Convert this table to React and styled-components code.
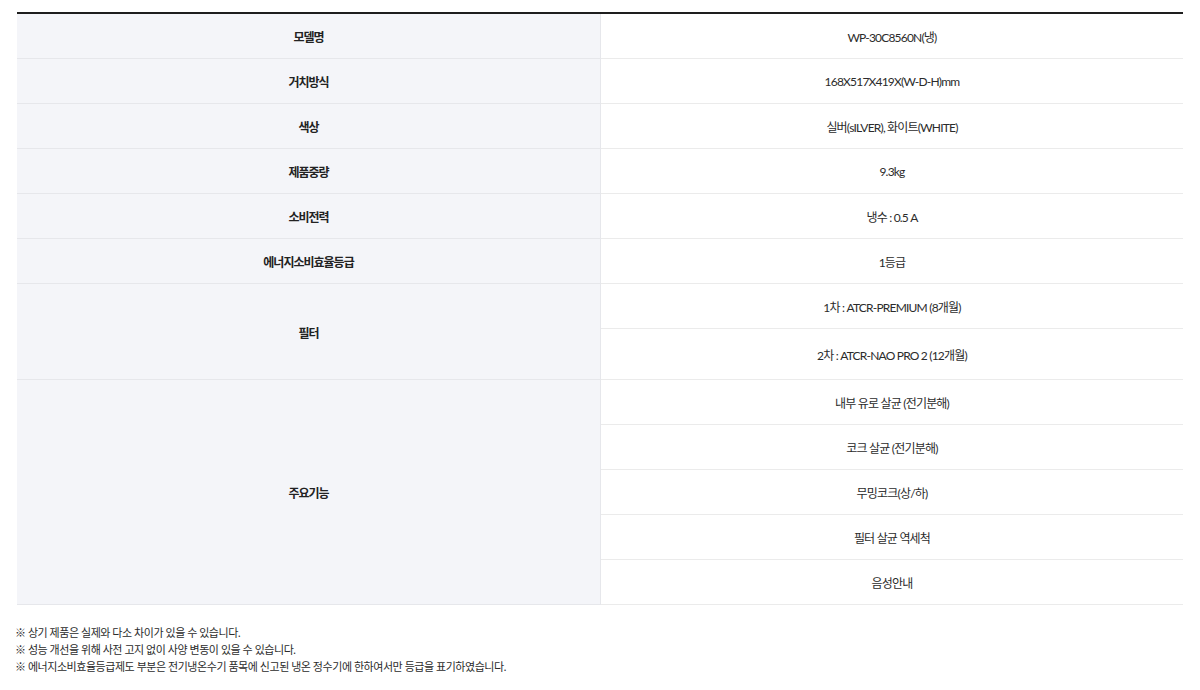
import React from 'react';
import styled, { createGlobalStyle } from 'styled-components';

const specs = [
  { label: '모델명', values: ['WP-30C8560N(냉)'] },
  { label: '거치방식', values: ['168X517X419X(W-D-H)mm'] },
  { label: '색상', values: ['실버(sILVER), 화이트(WHITE)'] },
  { label: '제품중량', values: ['9.3kg'] },
  { label: '소비전력', values: ['냉수 : 0.5 A'] },
  { label: '에너지소비효율등급', values: ['1등급'] },
  { label: '필터', values: ['1차 : ATCR-PREMIUM (8개월)', '2차 : ATCR-NAO PRO 2 (12개월)'], tall: [false, true] },
  {
    label: '주요기능',
    values: ['내부 유로 살균 (전기분해)', '코크 살균 (전기분해)', '무밍코크(상/하)', '필터 살균 역세척', '음성안내'],
  },
];

const notes = [
  '※ 상기 제품은 실제와 다소 차이가 있을 수 있습니다.',
  '※ 성능 개선을 위해 사전 고지 없이 사양 변동이 있을 수 있습니다.',
  '※ 에너지소비효율등급제도 부분은 전기냉온수기 품목에 신고된 냉온 정수기에 한하여서만 등급을 표기하였습니다.',
];

const GlobalStyle = createGlobalStyle`
  body {
    margin: 0;
    background: #fff;
    font-family: Lato, "Noto Sans CJK KR", sans-serif;
    color: #333;
  }
`;

const App = () => {
  return (
    <Page>
      <GlobalStyle />
      <SpecTable>
        <tbody>
          {specs.map((spec) =>
            spec.values.map((value, i) => (
              <tr key={spec.label + i}>
                {i === 0 && <Label rowSpan={spec.values.length}>{spec.label}</Label>}
                <Value $tall={spec.tall && spec.tall[i]}>{value}</Value>
              </tr>
            ))
          )}
        </tbody>
      </SpecTable>
      <Notes>
        {notes.map((note) => (
          <p key={note}>{note}</p>
        ))}
      </Notes>
    </Page>
  );
};

export default App;

const Page = styled.div`
  padding: 12px 17px 0 17px;
`;

const SpecTable = styled.table`
  width: 1166px;
  border-collapse: collapse;
  border-top: 2px solid #1e1e1e;
  table-layout: fixed;
`;

const Label = styled.th`
  width: 583px;
  background: #f4f5f9;
  border-bottom: 1px solid #e6e7eb;
  border-right: 1px solid #e6e7eb;
  font-family: "Noto Sans CJK KR", sans-serif;
  font-size: 12px;
  font-weight: 700;
  letter-spacing: -1px;
  color: #222;
  text-align: center;
  vertical-align: middle;
  padding: 2px 0 0 0;
`;

const Value = styled.td`
  height: ${(p) => (p.$tall ? '51px' : '45px')};
  box-sizing: border-box;
  border-bottom: 1px solid #ebebeb;
  font-family: Lato, "Noto Sans CJK KR", sans-serif;
  font-size: 12px;
  letter-spacing: -0.8px;
  color: #2b2b2b;
  text-align: center;
  vertical-align: middle;
  padding: 2px 0 0 0;
`;

const Notes = styled.div`
  padding: 19px 0 0 0;
  margin-left: -2px;

  p {
    margin: 0;
    font-family: Lato, "Noto Sans CJK KR", sans-serif;
    font-size: 11px;
    line-height: 17px;
    letter-spacing: -0.45px;
    color: #2b2b2b;
  }
`;
